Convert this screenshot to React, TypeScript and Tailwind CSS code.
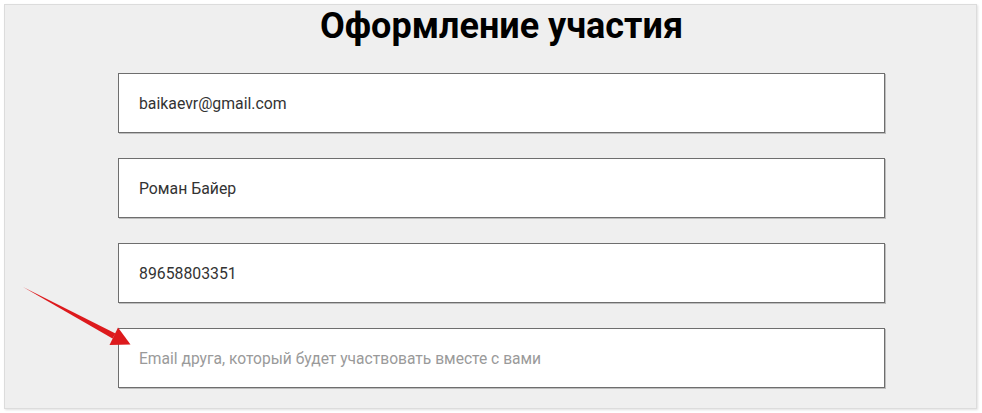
import React from "react";

const fields = [
  { value: "baikaevr@gmail.com", placeholder: "Email" },
  { value: "Роман Байер", placeholder: "Имя" },
  { value: "89658803351", placeholder: "Телефон" },
  { value: "", placeholder: "Email друга, который будет участвовать вместе с вами" },
];

function Arrow() {
  return (
    <svg className="absolute left-[18px] top-[282px]" width="120" height="70" viewBox="0 0 120 70">
      <path d="M5 5 L97.5 51.5 L94.5 56.5 Z" fill="#dd1a1d" />
      <path d="M100 45.5 L112.5 62.5 L91.5 63 Z" fill="#dd1a1d" />
    </svg>
  );
}

export default function App() {
  return (
    <div className="relative w-[982px] h-[413px] bg-white p-[4px] font-['Roboto',sans-serif]">
      <div className="w-[973px] h-[405px] bg-[#efefef] border border-[#dcdcdc] shadow-[1px_1px_2px_rgba(0,0,0,0.12)]">
        <div className="ml-[113px] w-[767px]">
          <h1 className="text-center text-[36px] leading-[40px] font-bold text-black pt-[1px]">
            Оформление участия
          </h1>
          <div className="flex flex-col gap-[25px] mt-[27px]">
            {fields.map((f) => (
              <input
                key={f.placeholder}
                defaultValue={f.value}
                placeholder={f.placeholder}
                className="h-[60px] w-full bg-white border border-[#6e6e6e] shadow-[1px_1px_0_#bdbdbd] px-[20px] text-[15.8px] text-[#333] placeholder:text-[#9a9a9a] placeholder:text-[15.6px] outline-none"
              />
            ))}
          </div>
        </div>
      </div>
      <Arrow />
    </div>
  );
}
